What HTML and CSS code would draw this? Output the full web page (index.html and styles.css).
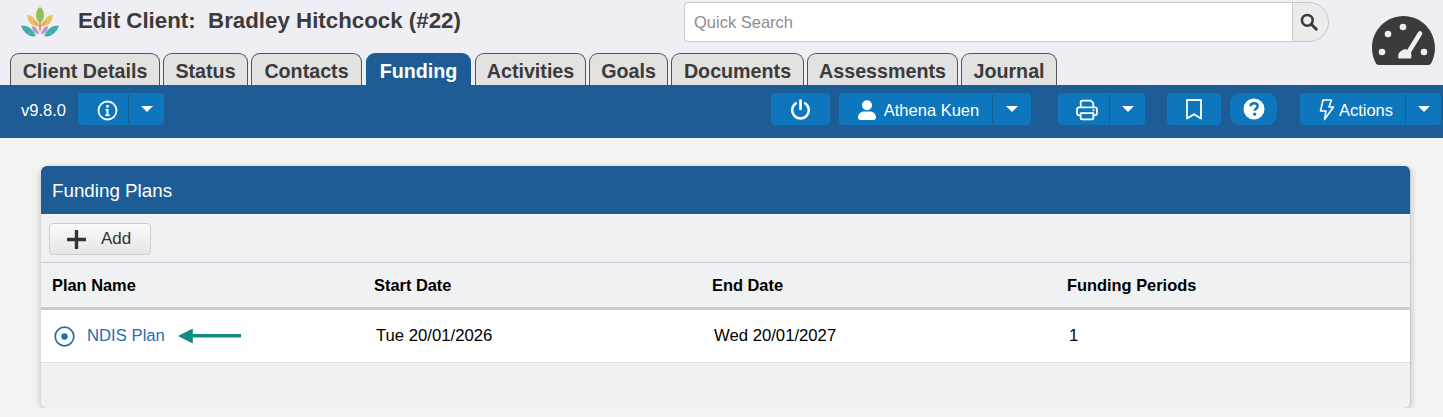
FILE: index.html
```html
<!DOCTYPE html>
<html lang="en">
<head>
  <meta charset="UTF-8">
  <meta name="viewport" content="width=device-width, initial-scale=1.0">
  <title>Edit Client</title>
  <link rel="stylesheet" href="styles.css">
</head>
<body>
  <header class="top">
    <div class="top-main">
      <div class="title-row">
        <!-- Lotus logo -->
        <svg class="logo" width="40" height="34" viewBox="0 0 40 34">
          <path d="M20 2c4 3 5 8 3 13l-3 4-3-4c-2-5-1-10 3-13z" fill="#8fc35a"/>
          <path d="M7 10c5 0 8 3 9 8l1 3c-6 0-9-4-10-11z" fill="#e3c65c"/>
          <path d="M33 10c-5 0-8 3-9 8l-1 3c6 0 9-4 10-11z" fill="#e3c65c"/>
          <path d="M13 15c3 0 5 2 6 6-3 0-6-2-6-6z" fill="#f4a650"/>
          <path d="M27 15c-3 0-5 2-6 6 3 0 6-2 6-6z" fill="#f4a650"/>
          <path d="M12 21c3 0 6 3 7 8-4 0-7-3-7-8z" fill="#b79bd0"/>
          <path d="M28 21c-3 0-6 3-7 8 4 0 7-3 7-8z" fill="#b79bd0"/>
          <path d="M20 15l1.500 6-1.500 7-1.500-7z" fill="#ee8f6a"/>
          <path d="M1 21c6-1 11 2 15 10-6 2-12-3-15-10z" fill="#3fb0a8"/>
          <path d="M39 21c-6-1-11 2-15 10 6 2 12-3 15-10z" fill="#3fb0a8"/>
        </svg>
        <h1 class="page-title">Edit Client:&nbsp; Bradley Hitchcock (#22)</h1>
        <div class="search">
          <input class="search-input" type="text" placeholder="Quick Search">
          <span class="search-btn">
            <svg width="18" height="18" viewBox="0 0 16 16"><circle cx="6.5" cy="6.5" r="4.8" fill="none" stroke="#3b3b3b" stroke-width="2.2"/><path d="M10 10l4.5 4.5" stroke="#3b3b3b" stroke-width="2.6" stroke-linecap="round"/></svg>
          </span>
        </div>
      </div>
      <nav class="tabs">
        <a class="tab tab-details">Client Details</a>
        <a class="tab tab-status">Status</a>
        <a class="tab tab-contacts">Contacts</a>
        <a class="tab tab-funding active">Funding</a>
        <a class="tab tab-activities">Activities</a>
        <a class="tab tab-goals">Goals</a>
        <a class="tab tab-documents">Documents</a>
        <a class="tab tab-assessments">Assessments</a>
        <a class="tab tab-journal">Journal</a>
      </nav>
    </div>
    <!-- Dashboard gauge -->
    <svg class="gauge" width="64" height="50" viewBox="0 0 64 50">
      <path d="M31.500 0C14.100 0 0 14.300 0 32c0 5.500 1.400 10.700 3.900 15.200.6 1.100 1.800 1.800 3.100 1.800h49c1.300 0 2.500-.7 3.100-1.800C61.600 42.700 63 37.500 63 32 63 14.300 48.900 0 31.500 0z" fill="#3b3b3b"/>
      <circle cx="31" cy="11" r="3.300" fill="#eeeef4"/>
      <circle cx="16" cy="18" r="3.300" fill="#eeeef4"/>
      <circle cx="10" cy="36" r="3.300" fill="#eeeef4"/>
      <circle cx="52" cy="36" r="3.300" fill="#eeeef4"/>
      <path d="M48 17.500L36 37" stroke="#eeeef4" stroke-width="4.600" stroke-linecap="round"/>
      <path d="M26.500 42.500c-1.500-5 2-8.500 7-9.500l5 3c1.200 2 1.200 4.500.5 6.500z" fill="#eeeef4"/>
    </svg>
  </header>

  <div class="toolbar">
    <span class="version">v9.8.0</span>
    <div class="btn btn-info">
      <span class="btn-main">
        <svg width="21" height="21" viewBox="0 0 21 21"><circle cx="10.500" cy="10.500" r="9" fill="none" stroke="#fff" stroke-width="1.800"/><circle cx="10.500" cy="6.300" r="1.500" fill="#fff"/><path d="M8.500 9h3v5.500h1.200v1.500H8.300v-1.500h1.200V10.500h-1z" fill="#fff"/></svg>
      </span>
      <span class="btn-caret"><i class="caret"></i></span>
    </div>
    <div class="btn btn-power">
      <svg width="21" height="21" viewBox="0 0 21 21"><path d="M6 4.200a8.300 8.300 0 1 0 9 0" fill="none" stroke="#fff" stroke-width="2.400" stroke-linecap="round"/><path d="M10.500 1.500v8.500" stroke="#fff" stroke-width="2.600" stroke-linecap="round"/></svg>
    </div>
    <div class="btn btn-user">
      <span class="btn-main">
        <svg width="18" height="20" viewBox="0 0 18 20"><circle cx="9" cy="5.200" r="5" fill="#fff"/><path d="M0 17.500C0 14 2.800 11.500 6 11.500h6c3.200 0 6 2.500 6 6 0 1.400-1 2.500-2.500 2.500h-13C1 20 0 18.900 0 17.500z" fill="#fff"/></svg>
        Athena Kuen
      </span>
      <span class="btn-caret"><i class="caret"></i></span>
    </div>
    <div class="btn btn-print">
      <span class="btn-main">
        <svg width="22" height="22" viewBox="0 0 21 21"><g fill="none" stroke="#fff" stroke-width="1.700"><path d="M4.500 8V2.800c0-.7.600-1.300 1.300-1.300h8.300l2.400 2.400V8"/><rect x="1" y="8" width="19" height="7.500" rx="2"/><path d="M4.500 13.500h12v5.200c0 .4-.4.800-.8.800H5.300c-.4 0-.8-.4-.8-.8z" fill="#0e76bc"/></g><circle cx="16.700" cy="10.800" r="1" fill="#fff"/></svg>
      </span>
      <span class="btn-caret"><i class="caret"></i></span>
    </div>
    <div class="btn btn-bookmark">
      <svg width="16" height="21" viewBox="0 0 16 21"><path d="M1 1h14v18.500l-7-4.300-7 4.300z" fill="none" stroke="#fff" stroke-width="1.800" stroke-linejoin="round"/></svg>
    </div>
    <div class="btn btn-help">
      <svg width="22" height="22" viewBox="0 0 22 22"><circle cx="11" cy="11" r="10.500" fill="#fff"/><path d="M7.500 8.300c.2-2 1.700-3 3.600-3 2 0 3.600 1.100 3.600 3 0 2.500-3 2.500-3 4.500" fill="none" stroke="#0e76bc" stroke-width="2.400"/><circle cx="11.700" cy="16.200" r="1.600" fill="#0e76bc"/></svg>
    </div>
    <div class="btn btn-actions">
      <span class="btn-main">
        <svg width="16" height="22" viewBox="0 0 16 22"><path d="M4 1h8.500L10 8h4.500L5.500 20.500 7 12H1.500z" fill="none" stroke="#fff" stroke-width="1.600" stroke-linejoin="round"/></svg>
        Actions
      </span>
      <span class="btn-caret"><i class="caret"></i></span>
    </div>
  </div>

  <main class="content">
    <section class="panel">
      <h2 class="panel-heading">Funding Plans</h2>
      <div class="panel-tools">
        <button class="add-btn" type="button">
          <svg width="19" height="19" viewBox="0 0 19 19"><path d="M9.500 1v17M1 9.500h17" stroke="#333" stroke-width="3.400" stroke-linecap="round"/></svg>
          Add
        </button>
      </div>
      <div class="plan-row plan-head">
        <span>Plan Name</span>
        <span>Start Date</span>
        <span>End Date</span>
        <span>Funding Periods</span>
      </div>
      <div class="plan-row plan-item">
        <span class="plan-name">
          <svg width="21" height="21" viewBox="0 0 21 21"><circle cx="10.500" cy="10.500" r="9.300" fill="none" stroke="#2a6ca8" stroke-width="1.700"/><circle cx="10.500" cy="10.500" r="3.200" fill="#2a6ca8"/></svg>
          <a class="plan-link">NDIS Plan</a>
          <svg class="arrow" width="63" height="16" viewBox="0 0 64 16"><path d="M0 8L15 .5v5.500h49v3.500H15v6z" fill="#0f8c84"/></svg>
        </span>
        <span class="plan-cell">Tue 20/01/2026</span>
        <span class="plan-cell">Wed 20/01/2027</span>
        <span class="plan-cell">1</span>
      </div>
      <div class="panel-foot"></div>
    </section>
  </main>
</body>
</html>
```

FILE: styles.css
```css
html, body {
  margin: 0;
  padding: 0;
}
body {
  background: #f2f2f1;
  font-family: "Liberation Sans", Arial, sans-serif;
  color: #000;
}

/* Top header */
.top {
  display: flex;
  height: 85px;
  background: #eeeef4;
  overflow: hidden;
}
.top-main {
  width: 1329px;
  flex: none;
}
.title-row {
  display: flex;
  align-items: flex-start;
  height: 53px;
  padding-top: 2px;
  box-sizing: border-box;
}
.logo {
  margin: 3px 0 0 20px;
  flex: none;
}
.page-title {
  margin: 4px 0 0 18px;
  font-size: 22.300px;
  line-height: 30px;
  font-weight: bold;
  color: #3b3b3b;
  white-space: nowrap;
}
.search {
  display: flex;
  width: 645px;
  height: 40px;
  margin-left: auto;
}
.search-input {
  flex: 1;
  min-width: 0;
  box-sizing: border-box;
  padding: 0 9px;
  border: 1px solid #c9c9c9;
  border-right: none;
  border-radius: 4px 0 0 4px;
  background: #fff;
  font-family: inherit;
  font-size: 16.500px;
  outline: none;
}
.search-input::placeholder {
  color: #8d8d8d;
}
.search-btn {
  display: flex;
  align-items: center;
  justify-content: center;
  width: 37px;
  border: 1px solid #c9c9c9;
  border-radius: 0 20px 20px 0;
  background: #ececec;
  padding-right: 3px;
  box-sizing: border-box;
}
.gauge {
  flex: none;
  margin: 16px 0 0 43px;
}

/* Tabs */
.tabs {
  display: flex;
  height: 32px;
  padding-left: 10px;
}
.tab {
  box-sizing: border-box;
  height: 33px;
  padding-top: 5px;
  border: 1px solid #555;
  border-bottom: none;
  border-radius: 9px 9px 0 0;
  background: #e2e2e2;
  color: #3b3b3b;
  font-size: 19.700px;
  line-height: 24px;
  font-weight: bold;
  text-align: center;
  white-space: nowrap;
}
.tab.active {
  border-color: #1d5c94;
  background: #1d5c94;
  color: #fff;
}
.tab-details { width: 150px; margin-right: 3px; }
.tab-status { width: 85px; margin-right: 3px; }
.tab-contacts { width: 111px; margin-right: 4px; }
.tab-funding { width: 105px; margin-right: 4px; }
.tab-activities { width: 111px; margin-right: 3px; }
.tab-goals { width: 79px; margin-right: 3px; }
.tab-documents { width: 133px; margin-right: 3px; }
.tab-assessments { width: 151px; margin-right: 3px; }
.tab-journal { width: 96px; }

/* Blue toolbar */
.toolbar {
  display: flex;
  align-items: center;
  height: 53px;
  padding-bottom: 5px;
  box-sizing: border-box;
  background: #1d5c94;
  color: #fff;
  font-size: 16.500px;
}
.version {
  width: 57px;
  margin: 3px 0 0 21px;
}
.btn {
  display: flex;
  align-items: center;
  justify-content: center;
  height: 32px;
  flex: none;
  box-sizing: border-box;
  border-radius: 4px;
  background: #0e76bc;
}
.btn-main {
  display: flex;
  align-items: center;
  justify-content: center;
  flex: 1;
  height: 100%;
  box-sizing: border-box;
  padding-top: 2px;
  gap: 8px;
}
.btn-caret {
  display: flex;
  align-items: center;
  justify-content: center;
  height: 30px;
  border-left: 1px solid #1d5c94;
  box-sizing: border-box;
}
.caret {
  display: block;
  width: 0;
  height: 0;
  border-left: 6px solid transparent;
  border-right: 6px solid transparent;
  border-top: 6px solid #fff;
}
.btn-info { width: 86px; margin-right: 607px; }
.btn-info .btn-main { padding-left: 9px; }
.btn-info .btn-caret { width: 36px; }
.btn-power { width: 59px; margin-right: 9px; }
.btn-user { width: 192px; margin-right: 27px; }
.btn-user .btn-main { padding-left: 6px; }
.btn-user .btn-caret { width: 39px; }
.btn-print { width: 87px; margin-right: 22px; }
.btn-print .btn-main { padding-left: 7px; }
.btn-print .btn-caret { width: 36px; }
.btn-bookmark { width: 54px; margin-right: 9px; }
.btn-help { width: 47px; margin-right: 23px; border-radius: 10px; }
.btn-actions { width: 141px; }
.btn-actions .btn-main { gap: 4px; padding-left: 7px; }
.btn-actions .btn-caret { width: 36px; }

/* Funding plans panel */
.content {
  padding: 28px 32px 0 41px;
}
.panel {
  height: 242px;
  display: flex;
  flex-direction: column;
  border-radius: 6px;
  border-right: 1px solid #c9c9ce;
  background: #f0f1f3;
  box-shadow: 0 2px 6px rgba(0, 0, 0, 0.22);
  overflow: hidden;
}
.panel-heading {
  height: 48px;
  margin: 0;
  padding-left: 11px;
  background: #1d5c94;
  color: #fff;
  font-size: 18.800px;
  font-weight: normal;
  line-height: 50px;
}
.panel-tools {
  height: 49px;
  box-sizing: border-box;
  padding: 9px 0 0 8px;
  border-bottom: 1px solid #cdcdd6;
}
.add-btn {
  display: flex;
  align-items: center;
  width: 102px;
  height: 32px;
  padding: 0 0 0 17px;
  gap: 15px;
  border: 1px solid #cfcfcf;
  border-radius: 4px;
  background: linear-gradient(#fafafa, #e6e6e6);
  color: #333;
  font-family: inherit;
  font-size: 17px;
}
.plan-row {
  display: grid;
  grid-template-columns: 322px 338px 355px 1fr;
  padding-left: 11px;
  align-items: center;
}
.plan-head {
  height: 47px;
  box-sizing: border-box;
  border-bottom: 3px solid #c9cad2;
  font-size: 16.400px;
  font-weight: bold;
}
.plan-item {
  height: 53px;
  box-sizing: border-box;
  border-bottom: 1px solid #dfdfe6;
  background: #fff;
  font-size: 16.700px;
}
.plan-cell {
  padding-left: 2px;
}
.plan-name {
  display: flex;
  align-items: center;
  padding-left: 2px;
}
.plan-link {
  margin-left: 12px;
  color: #2a6ca8;
}
.arrow {
  margin-left: 13px;
}
.panel-foot {
  flex: 1;
}
```
